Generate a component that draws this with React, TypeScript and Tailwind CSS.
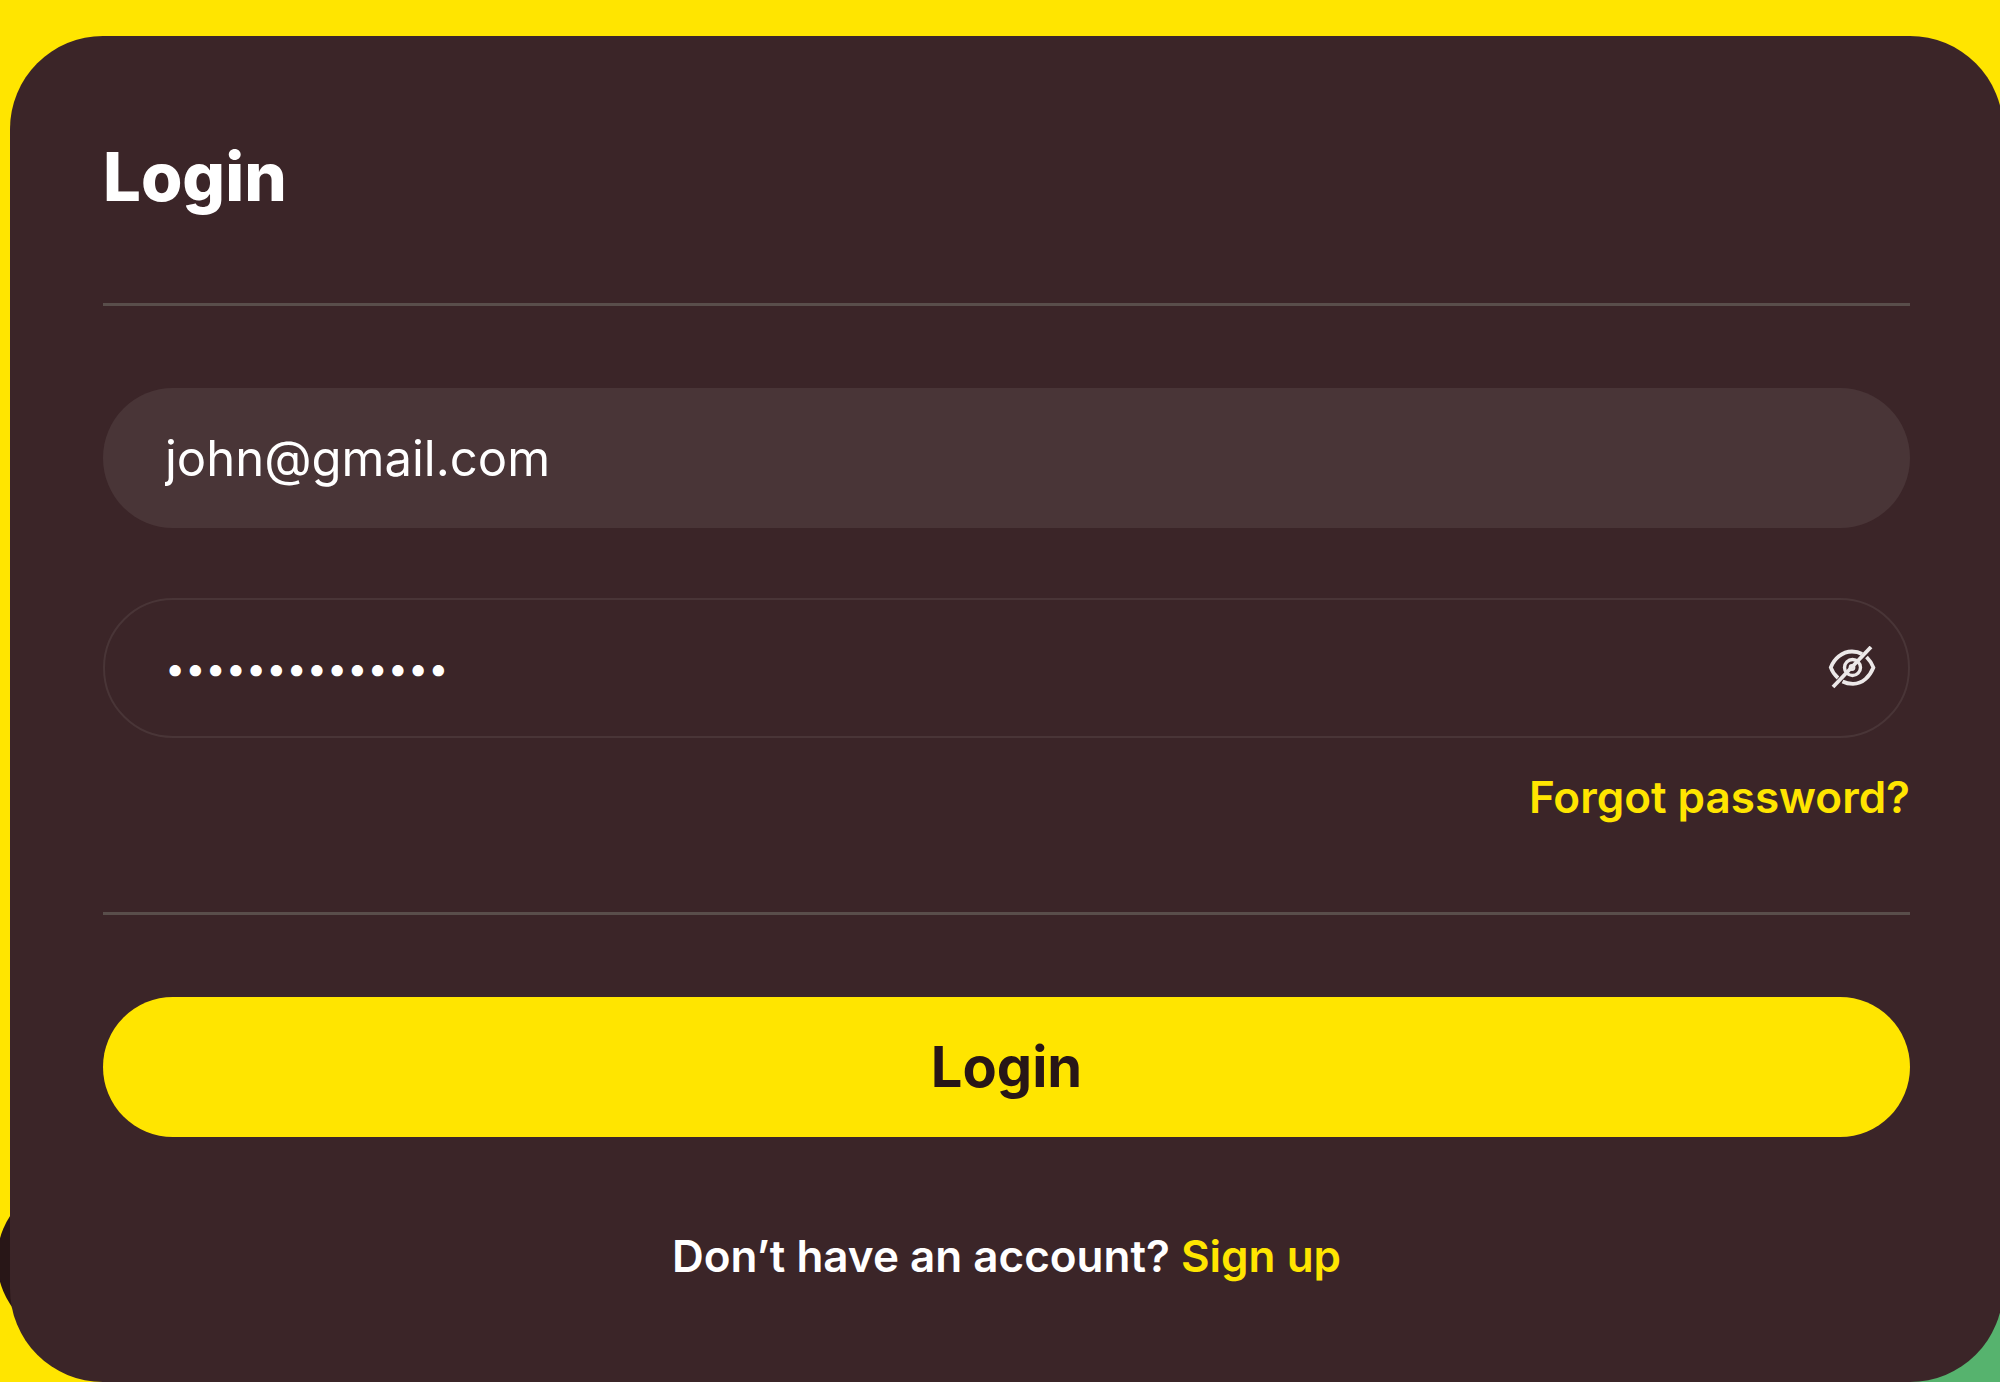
import { useState } from "react";

function EyeIcon({ slashed }: { slashed: boolean }) {
    return (
        <svg
            viewBox="0 0 48 44"
            fill="none"
            stroke="currentColor"
            strokeWidth="3.8"
            className="w-12 h-11"
            aria-hidden="true"
        >
            <path d="M10 32C6 28.500 4 25 2.800 21.500C6 13 14 5.500 24 5.500C28 5.500 31 6.200 34 8" />
            <path d="M38.500 11C42 14.500 44.200 18 45.400 21.500C42 30 35 37.800 25 37.800C21 37.800 17.500 37 14.500 35.500" />
            <circle cx="24.500" cy="21.500" r="8" strokeWidth="3.400" />
            <circle cx="24" cy="21.500" r="2.400" strokeWidth="2" />
            {slashed && <path d="M5 41L43 1" />}
        </svg>
    );
}

export default function App() {
    const [email, setEmail] = useState("john@gmail.com");
    const [password, setPassword] = useState("johnspassword1");
    const [visible, setVisible] = useState(false);

    return (
        <main className="relative min-h-screen overflow-hidden bg-[#ffe500] pt-9 pl-[10px] font-['Inter',sans-serif]">
            {/* background shapes */}
            <div className="absolute -left-[3px] bottom-[41px] size-[162px] rounded-full bg-[#281617]" />
            <div className="absolute right-0 bottom-0 size-[300px] bg-[#56b36e]" />

            <form
                onSubmit={(e) => e.preventDefault()}
                className="relative -mr-[3px] rounded-[93px] bg-[#3b2528] px-[93px] pt-[101px] pb-24 text-white"
            >
                <h1 className="text-[67px] leading-[80px] font-extrabold">Login</h1>

                <hr className="mt-[86px] border-t-3 border-[#594e4b]" />

                <input
                    type="email"
                    aria-label="Email"
                    value={email}
                    onChange={(e) => setEmail(e.target.value)}
                    className="mt-[82px] block h-[140px] w-full rounded-full bg-[#493537] px-[62px] text-[49px] outline-none"
                />

                <div className="mt-[70px] flex h-[140px] items-center rounded-full border-2 border-[#493537] pr-[32px] pl-[60px]">
                    <input
                        type={visible ? "text" : "password"}
                        aria-label="Password"
                        value={password}
                        onChange={(e) => setPassword(e.target.value)}
                        className="min-w-0 flex-1 bg-transparent text-[36px] outline-none"
                    />
                    <button
                        type="button"
                        aria-label="Toggle password visibility"
                        onClick={() => setVisible(!visible)}
                        className="text-[#ece8e8]"
                    >
                        <EyeIcon slashed={!visible} />
                    </button>
                </div>

                <div className="mt-[29px] text-right text-[44px] leading-[60px] font-semibold">
                    <a href="#" className="text-[#ffe500]">Forgot password?</a>
                </div>

                <hr className="mt-[85px] border-t-3 border-[#594e4b]" />

                <button
                    type="submit"
                    className="mt-[82px] h-[140px] w-full rounded-full bg-[#ffe500] text-[56px] font-bold text-[#281617]"
                >
                    Login
                </button>

                <p className="mt-[89px] text-center text-[44px] leading-[60px] font-semibold">
                    Don’t have an account?{" "}
                    <a href="#" className="text-[#ffe500]">Sign up</a>
                </p>
            </form>
        </main>
    );
}
